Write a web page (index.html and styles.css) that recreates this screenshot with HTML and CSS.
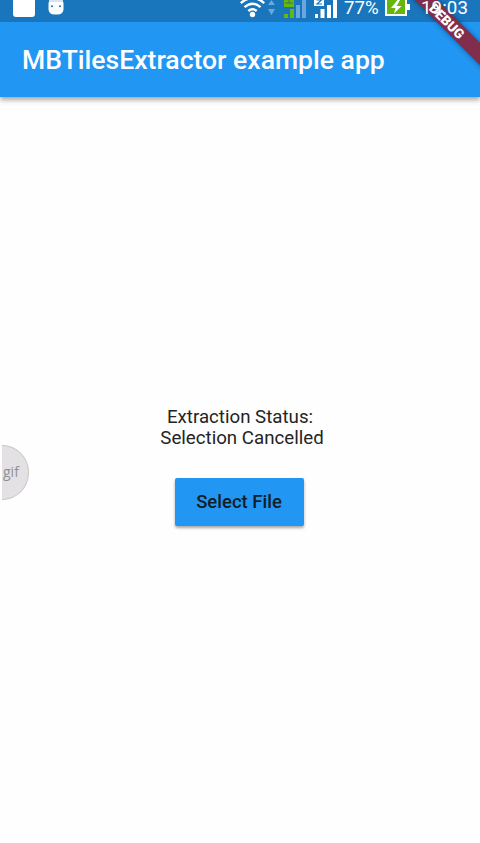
FILE: index.html
```html
<!DOCTYPE html>
<html lang="en">
<head>
<meta charset="utf-8">
<title>MBTilesExtractor example app</title>
<link rel="stylesheet" href="styles.css">
</head>
<body>
<div class="screen">
  <header class="top">
    <div class="status-bar">
      <svg class="notices" width="70" height="22" viewBox="0 0 70 22">
        <path d="M13 0h22v14a3 3 0 0 1-3 3H16a3 3 0 0 1-3-3z" fill="#fff"/>
        <path d="M50 0h12l1 3v6q0 5-5 5h-4q-5 0-5-5V3z" fill="#fff" stroke="#fff" stroke-width="1"/>
        <path d="M50 0h12l1 2H49z" fill="#dbe2f4"/>
        <circle cx="52" cy="6.3" r="1" fill="#1972ba"/><circle cx="60" cy="6.3" r="1" fill="#1972ba"/>
      </svg>
      <svg class="signals" width="100" height="22" viewBox="0 0 100 22">
        <g fill="none" stroke="#fff" stroke-width="2.4">
          <path d="M.8 3.2Q12.5-7.2 24.2 3.2"/>
          <path d="M4.5 7.2q8-7 16 0"/>
          <path d="M8.3 11q4.2-3.6 8.4 0"/>
        </g>
        <circle cx="12.5" cy="14.5" r="2.7" fill="#fff"/>
        <path d="M28 5l3.5-5L35 5zM28 9h7l-3.5 6z" fill="#69a8dc"/>
        <path d="M44 0h10v7H44zM44 14h4v4h-4zM50 9h4v9h-4z" fill="#66b512"/>
        <path d="M49 0v4M45 3h8" stroke="#397f52" stroke-width="1" fill="none"/>
        <path d="M56 5h4v13h-4zM62 0h4v18h-4z" fill="#69a8dc"/>
        <path d="M74 0h10v6H74zM75 14h3v4h-3zM80.5 9h4v9h-4zM87 5h4v13h-4zM93 0h4v18h-4z" fill="#fff"/>
        <path d="M76.5 0h5L77 4h5" stroke="#1976bd" stroke-width="1.2" fill="none"/>
      </svg>
      <span class="percent">77%</span>
      <svg class="battery" width="26" height="22" viewBox="0 0 26 22">
        <path d="M1-1h20v16H1z" fill="#66b70c" stroke="#fff" stroke-width="2"/>
        <path d="M22 4h3v6h-3z" fill="#fff"/>
        <path d="M12.5 0L6 8h4.500L9 13.500 16.500 6h-4.700L15 0z" fill="#fff"/>
      </svg>
      <span class="clock">19:03</span>
    </div>
    <h1 class="title">MBTilesExtractor example app</h1>
  </header>
  <main class="content">
    <p class="status">Extraction Status:<br><span class="result">Selection Cancelled</span></p>
    <button class="select">Select File</button>
  </main>
  <div class="recorder">gif</div>
  <div class="ribbon">DEBUG</div>
</div>
</body>
</html>
```
FILE: styles.css
```css
* { box-sizing: border-box; }
body { margin: 0; background: #fefefe; font-family: Roboto, sans-serif; }
.screen {
  position: relative;
  width: 480px;
  height: 843px;
  overflow: hidden;
  display: flex;
  flex-direction: column;
}
.top {
  height: 97px;
  flex: none;
  background: #2196f3;
  color: #fff;
  box-shadow: 0 3px 5px rgba(0, 0, 0, .34);
}
.status-bar {
  height: 22px;
  display: flex;
  background: #1976bd;
  font-size: 18.7px;
  line-height: 16px;
  white-space: nowrap;
}
.signals { margin-left: 170px; }
.percent { width: 41px; margin-left: 4px; }
.clock {
  position: relative;
  z-index: 1;
  margin-left: 10px;
  letter-spacing: .1px;
}
svg { flex: none; display: block; }
.title {
  margin: 0;
  padding: 0 22px;
  font-size: 26.55px;
  line-height: 76px;
  font-weight: 500;
  white-space: nowrap;
}
.content {
  flex: 1;
  display: flex;
  flex-direction: column;
  align-items: center;
  padding-top: 310px;
  padding-right: 2px;
}
.status {
  margin: 0;
  padding-left: 2px;
  color: #242424;
  font-size: 18.7px;
  line-height: 21px;
  text-align: center;
}
.result { margin-left: 4px; }
.select {
  width: 129px;
  height: 48px;
  margin-top: 29px;
  padding: 0;
  border: 0;
  border-radius: 2px;
  background: #2196f3;
  box-shadow: 0 2px 3px rgba(0, 0, 0, .35);
  color: #111d29;
  font: 500 18.5px Roboto, sans-serif;
}
.recorder {
  position: absolute;
  left: 2px;
  top: 445px;
  width: 27px;
  height: 55px;
  padding-left: 1px;
  border: 1px solid #c7c7c7;
  border-left: 0;
  border-radius: 0 27px 27px 0;
  background: #e3e1e3;
  color: #909090;
  font: 14px/51px "Open Sans", sans-serif;
}
.ribbon {
  position: absolute;
  left: 387px;
  top: 13px;
  width: 120px;
  height: 16px;
  transform: rotate(45deg);
  background: #822d4b;
  box-shadow: 0 0 5px rgba(0, 0, 0, .4);
  color: #fff;
  font-size: 13.5px;
  line-height: 16px;
  font-weight: 900;
  text-align: center;
}
```
